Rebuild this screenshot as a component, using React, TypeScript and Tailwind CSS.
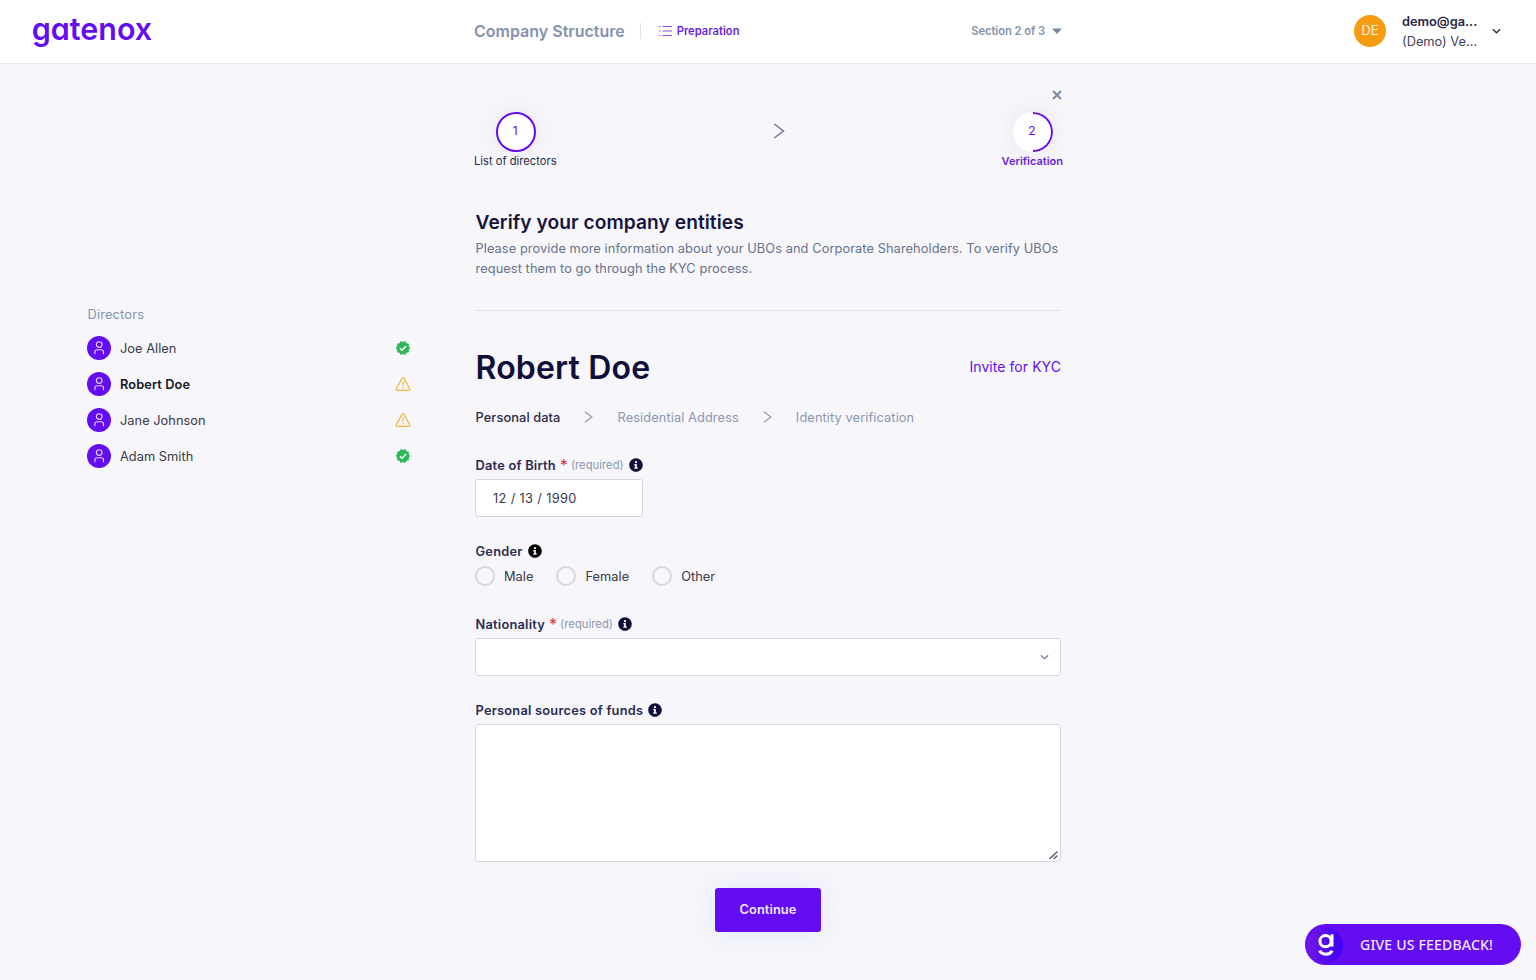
import React from "react";

const directors = [
  { name: "Joe Allen", verified: true, active: false },
  { name: "Robert Doe", verified: false, active: true },
  { name: "Jane Johnson", verified: false, active: false },
  { name: "Adam Smith", verified: true, active: false },
];

function ChevronRight({ className }: { className: string }) {
  return (
    <svg viewBox="0 0 12 16" className={className} fill="none" stroke="currentColor" strokeWidth="1.5">
      <path d="M1.2 1 10.5 8 1.2 15" />
    </svg>
  );
}

function ChevronDown({ className }: { className: string }) {
  return (
    <svg viewBox="0 0 10 6" className={className} fill="none" stroke="currentColor" strokeWidth="1.5">
      <path d="M1 1l4 4 4-4" />
    </svg>
  );
}

function InfoIcon({ className }: { className: string }) {
  return (
    <svg viewBox="0 0 512 512" className={className} fill="currentColor">
      <path d="M256 8C119 8 8 119 8 256s111 248 248 248 248-111 248-248S393 8 256 8zm0 102a42 42 0 1 1 0 84 42 42 0 0 1 0-84zm64 268a12 12 0 0 1-12 12H204a12 12 0 0 1-12-12v-24a12 12 0 0 1 12-12h20v-72h-20a12 12 0 0 1-12-12v-24a12 12 0 0 1 12-12h72a12 12 0 0 1 12 12v108h20a12 12 0 0 1 12 12z" />
    </svg>
  );
}

function PersonIcon() {
  return (
    <svg viewBox="0 0 24 24" className="size-6 shrink-0">
      <circle cx="12" cy="12" r="12" fill="#650df2" />
      <g fill="none" stroke="#e3d3ff" strokeWidth="1.1">
        <circle cx="12.2" cy="8.6" r="2.8" />
        <path d="M7.9 18.2v-2.4a2.1 2.1 0 0 1 2.1-2.1h4.4a2.1 2.1 0 0 1 2.1 2.1v2.4" />
      </g>
    </svg>
  );
}

function VerifiedIcon() {
  return (
    <svg viewBox="0 0 24 24" className="size-4">
      <path
        fill="#2db757"
        d="M23 12l-2.44-2.78.34-3.68-3.61-.82-1.89-3.18L12 3 8.6 1.54 6.71 4.72l-3.61.81.34 3.68L1 12l2.44 2.78-.34 3.69 3.61.82 1.89 3.18L12 21l3.4 1.46 1.89-3.18 3.61-.82-.34-3.68L23 12z"
      />
      <path d="M7.3 12.3l3.2 3.1 6.2-6.4" fill="none" stroke="#fff" strokeWidth="2.3" />
    </svg>
  );
}

function WarningIcon() {
  return (
    <svg viewBox="0 0 16 16" className="size-4" fill="none" stroke="#eeb73c" strokeWidth="1.2" strokeLinejoin="round">
      <path d="M7.1 2.1 1.3 12.7a1 1 0 0 0 .9 1.6h11.6a1 1 0 0 0 .9-1.6L8.9 2.1a1 1 0 0 0-1.8 0z" />
      <path d="M8 5.6v4.2M8 11v1.4" />
    </svg>
  );
}

function Label({ text, required, dark }: { text: string; required?: boolean; dark?: boolean }) {
  return (
    <div className="flex h-5 items-center pl-[0.5px] text-[12.8px] font-semibold tracking-[0.24px] text-[#2b2b52]">
      <span className="pt-px">{text}</span>
      {required && (
        <>
          <span className="ml-1 text-[16px] font-normal leading-5 tracking-normal text-[#d8343f]">*</span>
          <span className="ml-[3px] text-[11.2px] font-normal tracking-[0.06px] text-[#8b96b0]">(required)</span>
        </>
      )}
      <InfoIcon className={dark ? "ml-[5px] size-[14px] text-black" : "ml-[5px] size-[14px] text-[#100f3a]"} />
    </div>
  );
}

function Radio({ label }: { label: string }) {
  return (
    <label className="flex items-center">
      <span className="size-5 rounded-full border-2 border-[#d5d8e0]" />
      <span className="ml-[9px] pt-px text-[12.8px] tracking-[0.04px]">{label}</span>
    </label>
  );
}

export default function App() {
  return (
    <div className="flex h-[980px] w-[1536px] flex-col overflow-hidden bg-[#f6f6fb] font-['Inter',sans-serif] text-[#3a3a48]">
      <header className="flex h-16 shrink-0 border-b border-[#e6e7ee] bg-white">
        <div className="w-[474px] pl-[31px]">
          <svg
            width="128"
            height="62"
            viewBox="0 0 128 62"
            className="overflow-visible font-['Inter'] [font-feature-settings:'cv11'] [font-optical-sizing:none]"
          >
            <text x="0.7" y="39.5" textLength="120.5" lengthAdjust="spacingAndGlyphs" fontSize="31.5" fontWeight="600" fill="#650df2">
              gatenox
            </text>
          </svg>
        </div>
        <div className="flex h-[62px] w-[588px] items-center">
          <h1 className="text-[16px] font-semibold text-[#8492ad]">Company Structure</h1>
          <span className="ml-[15px] h-4 w-px bg-[#dfe2ea]" />
          <svg viewBox="0 0 14 12" className="ml-[18px] h-3 w-3.5" stroke="#8a4bee" strokeWidth="1.1">
            <path d="M0 1.5h1.4M3.5 1.5H13M0 6h1.4M3.5 6H13M0 10.5h1.4M3.5 10.5H13" />
          </svg>
          <span className="ml-1 pt-px text-[11.2px] font-semibold text-[#6a1fe0]">Preparation</span>
          <span className="ml-auto pt-px text-[11.2px] font-semibold tracking-[-0.06px] text-[#8492ad]">Section 2 of 3</span>
          <svg viewBox="0 0 10 6" className="ml-[7px] h-[6px] w-[10px]" fill="#7987a3">
            <path d="M0 .5h10L5 6z" />
          </svg>
        </div>
        <div className="flex h-[62px] flex-1 items-center pl-[292px]">
          <span className="flex size-8 items-center justify-center rounded-full bg-[#f59c12] text-[12.8px] text-[#fff3dc]">DE</span>
          <div className="ml-4 w-[80px] pt-[2px] text-[12.8px] leading-5">
            <div className="font-semibold text-[#26264a]">demo@ga...</div>
            <div className="text-[#3f3f5c]">(Demo) Ve...</div>
          </div>
          <ChevronDown className="ml-[10px] h-[6px] w-[9px] text-[#2b2b3e]" />
        </div>
      </header>

      <div className="flex flex-1">
        <aside className="w-[474px] pl-[87px] pt-[240px]">
          <div className="w-[324px]">
            <h2 className="h-5 pl-[0.5px] pt-px text-[12.8px] leading-5 tracking-[0.18px] text-[#8492ad]">Directors</h2>
            <ul className="mt-3 flex flex-col gap-3">
              {directors.map((d) => (
                <li key={d.name} className="flex h-6 items-center">
                  <PersonIcon />
                  <span
                    className={
                      d.active
                        ? "ml-[9px] flex-1 pt-px text-[12.8px] font-semibold tracking-[0.1px] text-[#17171f]"
                        : "ml-[9px] flex-1 pt-px text-[12.8px] tracking-[0.03px]"
                    }
                  >
                    {d.name}
                  </span>
                  {d.verified ? <VerifiedIcon /> : <WarningIcon />}
                </li>
              ))}
            </ul>
          </div>
        </aside>

        <main className="flex w-[588px] flex-col">
          <div className="flex h-12 justify-end pt-[26px]">
            <svg viewBox="0 0 10 10" className="size-[10px] shrink-0" stroke="#7d8aa5" strokeWidth="2">
              <path d="M1 1l8 8M9 1 1 9" />
            </svg>
          </div>
          <div className="-mr-px flex justify-between">
            <div className="flex flex-col items-center">
              <span className="ml-[2px] flex size-10 items-center justify-center rounded-full border-2 border-[#650df2] bg-white pb-[3px] pr-[2px] text-[12px] text-[#650df2] shadow-[0_0_24px_rgba(40,40,60,0.08)]">
                1
              </span>
              <span className="text-[11.2px] leading-[18px] text-[#2c2c45]">List of directors</span>
            </div>
            <ChevronRight className="mt-[11px] h-4 w-3 text-[#6d7890]" />
            <div className="flex flex-col items-center">
              <svg viewBox="0 0 40 40" className="ml-[2px] size-10 rounded-full shadow-[0_0_24px_rgba(40,40,60,0.08)]">
                <circle cx="20" cy="20" r="20" fill="#fff" />
                <path d="M20 1a19 19 0 0 1 0 38" fill="none" stroke="#650df2" strokeWidth="2" />
                <text x="19" y="23" textAnchor="middle" fontSize="12" fill="#650df2">
                  2
                </text>
              </svg>
              <span className="text-[11px] font-semibold leading-[18px] text-[#6a1fe0]">Verification</span>
            </div>
          </div>

          <div className="mx-px flex flex-col">
            <h2 className="mt-[38px] h-7 pl-[0.5px] text-[19.2px] font-semibold leading-7 tracking-[0.05px] text-[#17153f]">
              Verify your company entities
            </h2>
            <p className="mt-[3px] whitespace-nowrap border-b border-[#e3e4ec] pb-[31px] pl-[0.5px] text-[12.8px] leading-5 tracking-[0.08px] text-[#66738c]">
              Please provide more information about your UBOs and Corporate Shareholders. To verify UBOs
              <br />
              request them to go through the KYC process.
            </p>
            <div className="mt-[36px] flex h-10 items-center justify-between">
              <h3 className="pl-[0.5px] pt-px text-[32px] font-semibold tracking-[0.18px] text-[#100f3a]">Robert Doe</h3>
              <a className="pb-[2px] text-[14px] tracking-[0.06px] text-[#650df2]">Invite for KYC</a>
            </div>
            <div className="mt-5 flex h-5 items-center pl-[0.5px] text-[12.8px] tracking-[0.1px] text-[#8b96b0]">
              <span className="pt-px font-medium text-[#2b2b45]">Personal data</span>
              <ChevronRight className="ml-6 mr-6 h-3 w-[9px]" />
              <span className="pt-px">Residential Address</span>
              <ChevronRight className="ml-6 mr-6 h-3 w-[9px]" />
              <span className="pt-px">Identity verification</span>
            </div>

            <div className="mt-7">
              <Label text="Date of Birth" required />
              <div className="mt-1 flex h-[38px] w-[168px] items-center rounded-[3px] border border-[#d5d8e0] bg-white pl-[17px] pt-px text-[12.8px] tracking-[0.35px]">
                12 / 13 / 1990
              </div>
            </div>
            <div className="mt-6">
              <Label text="Gender" dark />
              <div className="mt-[5px] flex h-5 gap-[23px]">
                <Radio label="Male" />
                <Radio label="Female" />
                <Radio label="Other" />
              </div>
            </div>
            <div className="mt-7">
              <Label text="Nationality" required />
              <div className="mt-1 flex h-[38px] items-center justify-end rounded-[3px] border border-[#d5d8e0] bg-white pr-[11px]">
                <ChevronDown className="h-[6px] w-[9px] text-[#7d8aa5]" />
              </div>
            </div>
            <div className="mt-6">
              <Label text="Personal sources of funds" />
              <div className="mt-1 flex h-[138px] items-end justify-end rounded-[3px] border border-[#d5d8e0] bg-white pb-px pr-[2px]">
                <svg viewBox="0 0 10 10" className="size-[10px]" stroke="#505058" strokeWidth="1.2">
                  <path d="M1.5 9 9.5 1.5M5.5 9 9.5 5.5" />
                </svg>
              </div>
            </div>
            <button className="mt-[26px] h-11 w-[106px] self-center rounded-[3px] bg-[#650df2] text-[12.8px] font-semibold tracking-[0.1px] text-[#f1e8ff] shadow-[0_0_24px_rgba(90,140,220,0.14)]">
              Continue
            </button>
          </div>
        </main>
      </div>

      <button className="absolute left-[1305px] top-[924px] flex h-[41px] w-[216px] items-center rounded-full bg-[#650df2]">
        <svg viewBox="0 0 38 38" className="size-[38px]">
          <defs>
            <linearGradient id="badge" x1="0" y1="0" x2="1" y2="0">
              <stop offset="0" stopColor="#7417e6" />
              <stop offset="1" stopColor="#3d00f5" />
            </linearGradient>
          </defs>
          <circle cx="20" cy="19.5" r="18" fill="url(#badge)" />
          <g fill="none" stroke="#fff" strokeWidth="3">
            <circle cx="20.5" cy="15.2" r="5.6" />
            <path d="M27 8.2v12.3M14.4 24.8c3 4.6 10.2 4.6 12.8 0" />
          </g>
        </svg>
        <span className="ml-[17px] whitespace-nowrap pb-px font-['Noto_Sans',sans-serif] text-[14px] font-medium tracking-[0.2px] text-[#f1e8ff]">
          GIVE US FEEDBACK!
        </span>
      </button>
    </div>
  );
}
